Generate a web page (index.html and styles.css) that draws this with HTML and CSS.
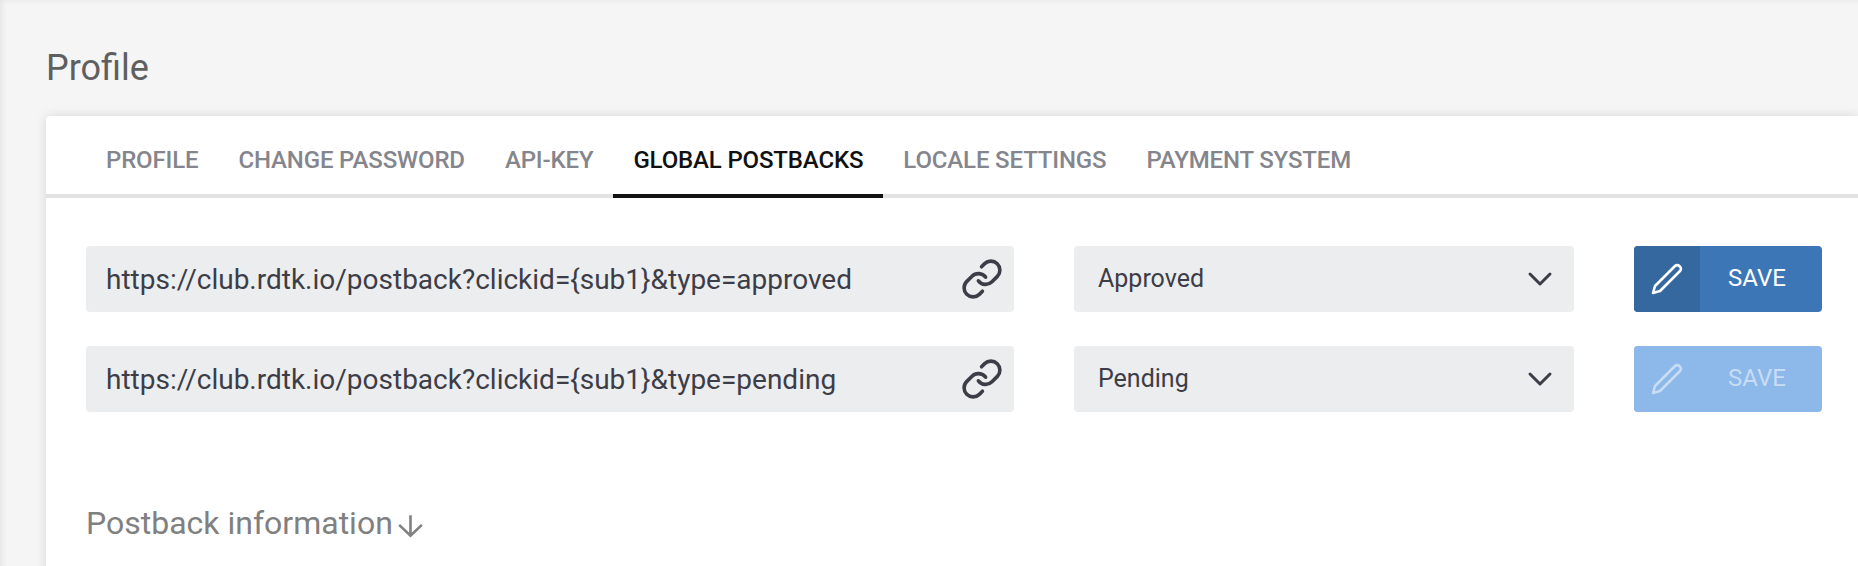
FILE: index.html
```html
<!DOCTYPE html>
<html lang="en">
<head>
<meta charset="utf-8">
<title>Profile</title>
<link rel="stylesheet" href="styles.css">
</head>
<body>
<main class="page">
  <h1 class="title">Profile</h1>
  <section class="card">
    <nav class="tabs">
      <a class="tab">PROFILE</a>
      <a class="tab">CHANGE PASSWORD</a>
      <a class="tab">API-KEY</a>
      <a class="tab tab-active">GLOBAL POSTBACKS</a>
      <a class="tab">LOCALE SETTINGS</a>
      <a class="tab">PAYMENT SYSTEM</a>
    </nav>
    <div class="rows">
      <div class="row">
        <div class="field url">
          <span class="url-text">https://club.rdtk.io/postback?clickid={sub1}&amp;type=approved</span>
          <svg class="link-icon" viewBox="2 2 20 20"><path d="M10 13a5 5 0 0 0 7.54.54l3-3a5 5 0 0 0-7.07-7.07l-1.72 1.71"/><path d="M14 11a5 5 0 0 0-7.54-.54l-3 3a5 5 0 0 0 7.07 7.07l1.71-1.71"/></svg>
        </div>
        <div class="field select">
          <span>Approved</span>
          <svg class="chevron" viewBox="0 0 24 14"><path d="M2 2l10 10L22 2"/></svg>
        </div>
        <button class="save">
          <span class="save-icon"><svg class="pencil" viewBox="0 0 32 32"><path d="M2 30l2-7L24 3a3 3 0 0 1 4.3 0l.7.7a3 3 0 0 1 0 4.3L9 28z"/></svg></span>
          <span class="save-label">SAVE</span>
        </button>
      </div>
      <div class="row">
        <div class="field url">
          <span class="url-text">https://club.rdtk.io/postback?clickid={sub1}&amp;type=pending</span>
          <svg class="link-icon" viewBox="2 2 20 20"><path d="M10 13a5 5 0 0 0 7.54.54l3-3a5 5 0 0 0-7.07-7.07l-1.72 1.71"/><path d="M14 11a5 5 0 0 0-7.54-.54l-3 3a5 5 0 0 0 7.07 7.07l1.71-1.71"/></svg>
        </div>
        <div class="field select">
          <span>Pending</span>
          <svg class="chevron" viewBox="0 0 24 14"><path d="M2 2l10 10L22 2"/></svg>
        </div>
        <button class="save save-disabled">
          <span class="save-icon"><svg class="pencil" viewBox="0 0 32 32"><path d="M2 30l2-7L24 3a3 3 0 0 1 4.3 0l.7.7a3 3 0 0 1 0 4.3L9 28z"/></svg></span>
          <span class="save-label">SAVE</span>
        </button>
      </div>
    </div>
    <h2 class="info">Postback information<svg class="arrow" viewBox="0 0 25 22"><path d="M12.5 1v19M2 10l10.5 10L23 10"/></svg></h2>
  </section>
</main>
</body>
</html>
```
FILE: styles.css
```css
* { box-sizing: border-box; }
html, body { margin: 0; height: 100%; overflow: hidden; }
body { font-family: Roboto, "Liberation Sans", sans-serif; background: #f5f5f5; }
.page {
  height: 566px;
  padding: 50px 0 0 46px;
  background: #f5f5f5;
  box-shadow: inset 6px 4px 6px -4px rgba(0, 0, 0, 0.07);
  overflow: hidden;
}
.title {
  margin: 0 0 30px 0;
  font-size: 36px;
  line-height: 36px;
  font-weight: 400;
  color: #5f5f5f;
}
.card {
  height: 460px;
  padding: 0 36px 0 40px;
  background: #fff;
  border-radius: 4px 0 0 0;
  box-shadow: 0 0 12px rgba(0, 0, 0, 0.12);
}
.tabs {
  display: flex;
  height: 82px;
  margin: 0 -36px 0 -40px;
  padding-left: 40px;
  border-bottom: 4px solid #e2e2e3;
}
.tab {
  height: 82px;
  padding: 32px 20px 0;
  font-size: 24px;
  letter-spacing: -0.15px;
  line-height: 24px;
  font-weight: 500;
  color: #85858d;
  white-space: nowrap;
}
.tab-active {
  color: #111;
  border-bottom: 4px solid #111;
}
.rows { display: flex; flex-direction: column; gap: 34px; padding-top: 48px; }
.row { display: flex; gap: 60px; height: 66px; }
.field {
  display: flex;
  align-items: center;
  justify-content: space-between;
  height: 66px;
  background: #ecedef;
  border-radius: 4px;
  color: #3d3d47;
}
.url { width: 928px; padding: 0 14px 0 20px; font-size: 28px; }
.url-text { white-space: nowrap; }
.select { width: 500px; padding: 0 22px 0 24px; font-size: 25px; }
.select span { position: relative; top: -1px; }
.link-icon { width: 36px; height: 36px; fill: none; stroke: #3d3d47; stroke-width: 2; stroke-linecap: round; stroke-linejoin: round; overflow: visible; }
.chevron { width: 24px; height: 14px; fill: none; stroke: #3d3d47; stroke-width: 3; stroke-linecap: round; stroke-linejoin: round; overflow: visible; }
.save {
  display: flex;
  width: 188px;
  height: 66px;
  padding: 0;
  border: 0;
  border-radius: 4px;
  overflow: hidden;
  background: #3d76b7;
  color: #fff;
  font: 400 24px Roboto, "Liberation Sans", sans-serif;
}
.save-icon {
  display: flex;
  align-items: center;
  justify-content: center;
  width: 66px;
  height: 66px;
  background: #34689f;
}
.save-label { flex: 1; line-height: 64px; text-align: center; padding-right: 8px; }
.pencil { width: 32px; height: 32px; fill: none; stroke: #fff; stroke-width: 2.6; stroke-linejoin: round; }
.save-disabled { background: #8cb8ea; color: #c8dcf4; }
.save-disabled .save-icon { background: #8cb8ea; }
.save-disabled .pencil { stroke: #c8dcf4; }
.info {
  display: flex;
  align-items: flex-end;
  gap: 4px;
  margin: 92px 0 0;
  font-size: 32px;
  line-height: 38px;
  font-weight: 400;
  color: #808080;
}
.arrow { width: 27px; height: 24px; margin-bottom: 4px; fill: none; stroke: #808080; stroke-width: 2.4; }
```
